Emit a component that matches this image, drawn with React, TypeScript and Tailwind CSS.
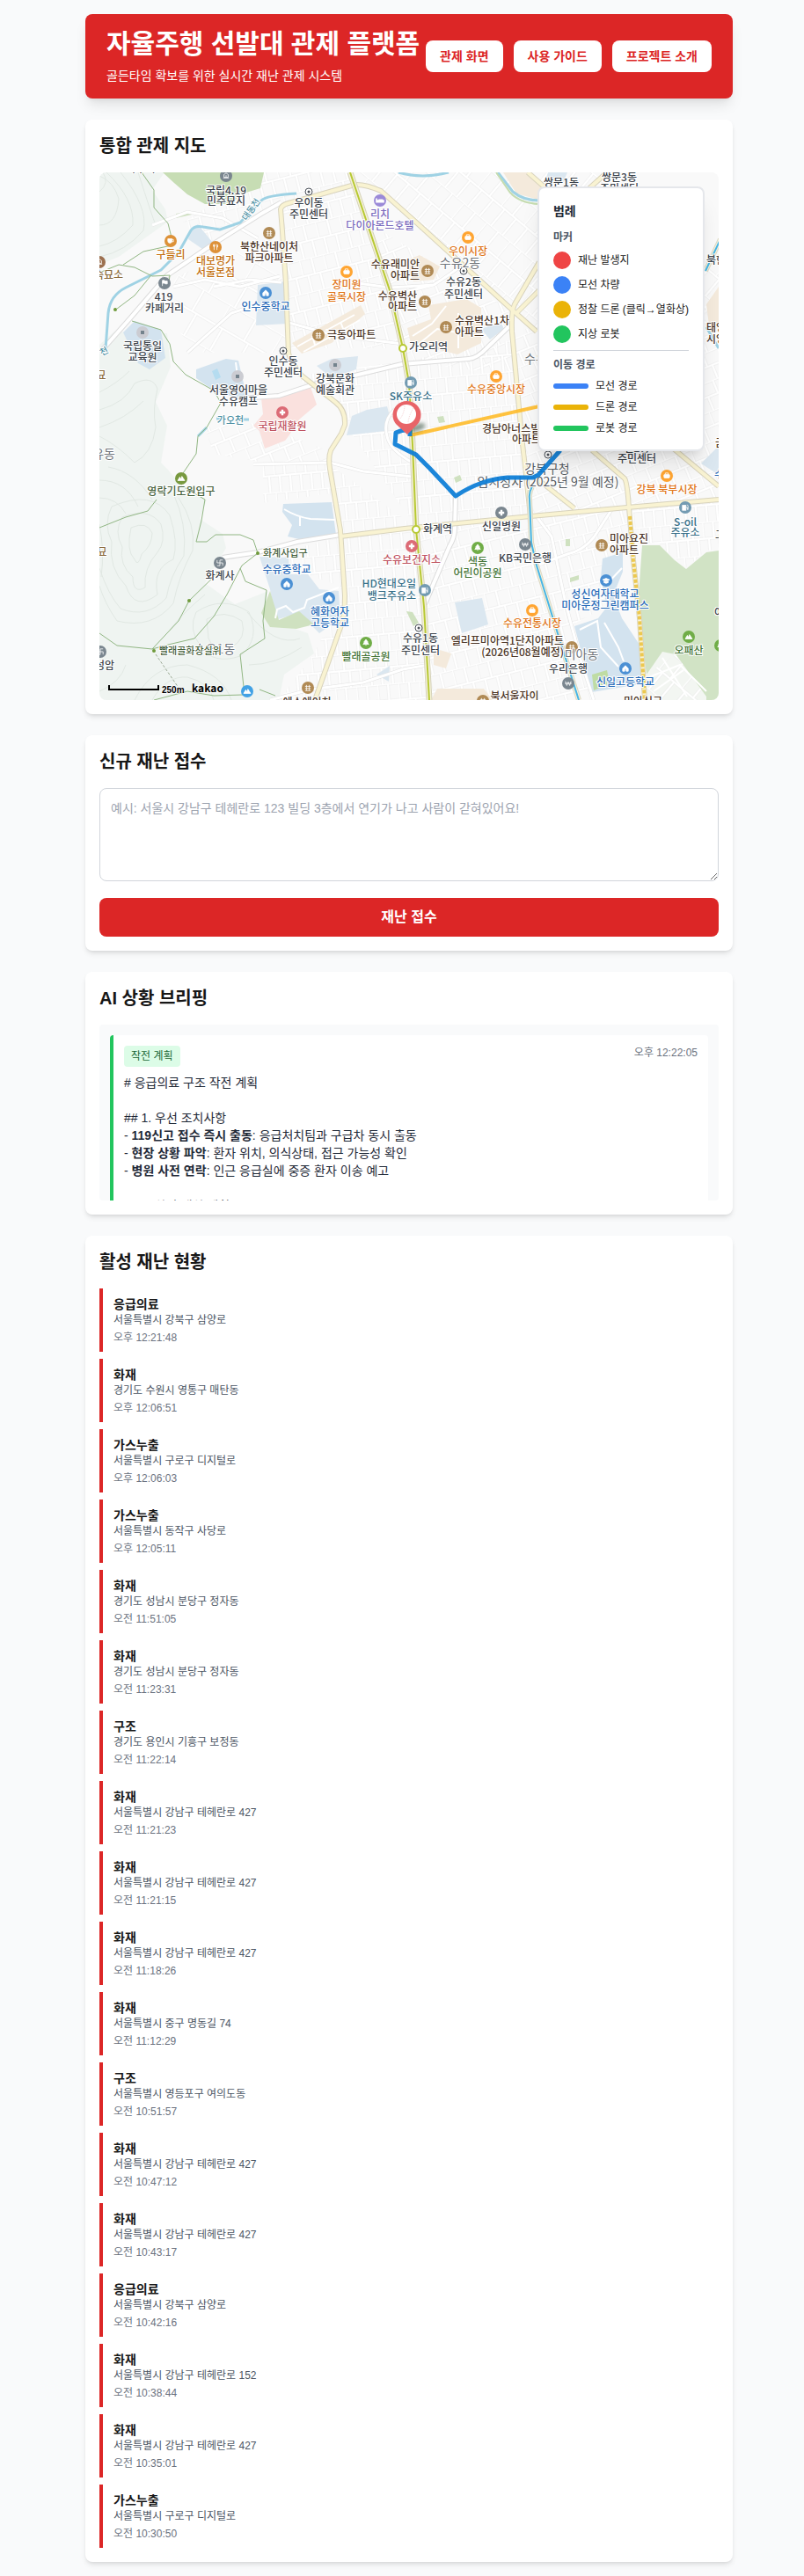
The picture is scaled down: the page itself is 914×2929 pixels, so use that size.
import React from "react";

type Incident = { kind: string; place: string; time: string };

const incidents: Incident[] = [
  { kind: "응급의료", place: "서울특별시 강북구 삼양로", time: "오후 12:21:48" },
  { kind: "화재", place: "경기도 수원시 영통구 매탄동", time: "오후 12:06:51" },
  { kind: "가스누출", place: "서울특별시 구로구 디지털로", time: "오후 12:06:03" },
  { kind: "가스누출", place: "서울특별시 동작구 사당로", time: "오후 12:05:11" },
  { kind: "화재", place: "경기도 성남시 분당구 정자동", time: "오전 11:51:05" },
  { kind: "화재", place: "경기도 성남시 분당구 정자동", time: "오전 11:23:31" },
  { kind: "구조", place: "경기도 용인시 기흥구 보정동", time: "오전 11:22:14" },
  { kind: "화재", place: "서울특별시 강남구 테헤란로 427", time: "오전 11:21:23" },
  { kind: "화재", place: "서울특별시 강남구 테헤란로 427", time: "오전 11:21:15" },
  { kind: "화재", place: "서울특별시 강남구 테헤란로 427", time: "오전 11:18:26" },
  { kind: "화재", place: "서울특별시 중구 명동길 74", time: "오전 11:12:29" },
  { kind: "구조", place: "서울특별시 영등포구 여의도동", time: "오전 10:51:57" },
  { kind: "화재", place: "서울특별시 강남구 테헤란로 427", time: "오전 10:47:12" },
  { kind: "화재", place: "서울특별시 강남구 테헤란로 427", time: "오전 10:43:17" },
  { kind: "응급의료", place: "서울특별시 강북구 삼양로", time: "오전 10:42:16" },
  { kind: "화재", place: "서울특별시 강남구 테헤란로 152", time: "오전 10:38:44" },
  { kind: "화재", place: "서울특별시 강남구 테헤란로 427", time: "오전 10:35:01" },
  { kind: "가스누출", place: "서울특별시 구로구 디지털로", time: "오전 10:30:50" },
];

type Kind =
  | "apt" | "shop" | "food" | "cafe" | "school" | "univ" | "tree" | "cross"
  | "bank" | "gas" | "temple" | "hotel" | "flag" | "peak" | "tomb";

const glyphs: Record<Kind, React.ReactNode> = {
  apt: <path d="M-2 -4V4M2 -4V4M-4 -2H4M-4 1H4M-4 4H4" />,
  shop: (
    <>
      <rect x="-4" y="-2" width="8" height="5" rx="1" fill="#fff" />
      <path d="M-2 -2V-4H2V-2" />
    </>
  ),
  food: <path d="M-3 -4V-1Q-2 0 -1 -1V-4M-2 -4V4M2 4V-4Q4 -3 3 0H2" />,
  cafe: (
    <>
      <path d="M-4 -3H2V1Q1 3 -1 3Q-4 3 -4 0Z" fill="#fff" />
      <path d="M2 -2H4V1H2" />
    </>
  ),
  school: <path d="M-4 4V0L0 -4L4 0V4H1V1H-1V4Z" fill="#fff" />,
  univ: <path d="M-5 -1L0 -3L5 -1L0 1ZM-3 1V3Q0 5 3 3V1L0 2Z" fill="#fff" />,
  tree: <path d="M0 -5L3 -1H2L4 2H-4L-2 -1H-3ZM0 2V4" fill="#fff" />,
  cross: <path d="M0 -4V4M-4 0H4" strokeWidth="3" />,
  bank: <path d="M-4 -3L-2 3L0 -2L2 3L4 -3M-5 0H5" />,
  gas: (
    <>
      <rect x="-4" y="-3" width="5" height="7" fill="#fff" />
      <path d="M1 0H3V3H4V-2L3 -4" />
    </>
  ),
  temple: <path d="M0 -4V4M-4 0H4M-4 -4V0M4 4V0M0 -4H4M0 4H-4" />,
  hotel: <path d="M-5 3V-3M-5 2H5V0H-5M-2 -1H4" strokeWidth="2" />,
  flag: <path d="M-3 4V-4H0L1 -3H4V1H1L0 0H-3" fill="#fff" />,
  peak: <path d="M-5 3L-2 -2L0 1L1 -3L5 3Z" fill="#fff" />,
  tomb: <path d="M-4 3H4M-3 2V-2L0 -4L3 -2V2ZM0 -1V2" />,
};

const BROWN = "#b08a55";
const ORANGE = "#ffa532";
const SLATE = "#7a868f";
const BLUE = "#4b90d4";
const GREEN = "#70ad47";
const ROSE = "#dc6b76";
const TEAL = "#739bb2";

const pois: [number, number, Kind, string][] = [
  [144, 4, "tomb", SLATE], [319, 32, "hotel", "#9b8ad8"], [193, 69, "apt", BROWN],
  [81, 78, "cafe", "#dd9138"], [132, 85, "food", "#dd9138"], [0, 102, "tomb", "#9c7050"],
  [74, 126, "flag", SLATE], [189, 137, "school", BLUE], [281, 113, "shop", ORANGE],
  [373, 112, "apt", BROWN], [370, 147, "apt", BROWN], [249, 185, "apt", BROWN],
  [208, 273, "cross", ROSE], [354, 239, "gas", TEAL], [419, 74, "shop", ORANGE],
  [394, 176, "apt", BROWN], [451, 232, "shop", ORANGE], [93, 348, "peak", "#78993f"],
  [137, 444, "temple", SLATE], [213, 468, "school", BLUE], [261, 484, "school", BLUE],
  [303, 535, "tree", GREEN], [355, 425, "cross", ROSE], [370, 475, "gas", TEAL],
  [1, 545, "temple", SLATE], [168, 590, "peak", "#42a2e5"], [237, 586, "apt", BROWN],
  [457, 387, "cross", SLATE], [430, 427, "tree", GREEN], [484, 423, "bank", SLATE],
  [571, 424, "apt", BROWN], [645, 345, "shop", ORANGE], [666, 381, "gas", TEAL],
  [576, 464, "univ", BLUE], [492, 498, "shop", ORANGE], [537, 540, "apt", BROWN],
  [533, 581, "bank", SLATE], [598, 564, "school", BLUE], [670, 528, "peak", GREEN],
  [436, 601, "apt", BROWN], [706, 538, "tree", GREEN],
];

const offices: [number, number][] = [[238, 22], [209, 203], [414, 112], [510, 321], [363, 518]];
const halls: [number, number][] = [[49, 182], [268, 219], [157, 232]];
const trailDots: [number, number][] = [[18, 156], [180, 433], [102, 487], [62, 544]];
const stations: [number, number][] = [[345, 200], [360, 406]];

type Anchor = "start" | "middle" | "end";
const INK = "#3d444c";
const COCOA = "#4c3628";
const AMBER = "#e0761a";
const NAVY = "#2a6cb8";
const FOREST = "#467538";
const GREY = "#70757b";
const WINE = "#bf5361";
const SEA = "#387089";

const labels: [number, number, string, string, Anchor?, number?][] = [
  [47, -4, "약수터", INK],
  [144, 21, "국립4.19", INK], [144, 33, "민주묘지", INK],
  [238, 35, "우이동", INK], [238, 48, "주민센터", INK],
  [319, 48, "리치", "#7a6bbd"], [319, 61, "다이아몬드호텔", "#7a6bbd"],
  [193, 85, "북한산네이처", COCOA], [193, 98, "파크아파트", COCOA],
  [81, 94, "구들리", "#c26f10"], [132, 101, "대보명가", "#c26f10"], [132, 114, "서울본점", "#c26f10"],
  [27, 117, "숙묘소", "#8a6a3c", "end"],
  [73, 142, "419", INK], [74, 155, "카페거리", INK],
  [189, 153, "인수중학교", NAVY],
  [281, 128, "장미원", AMBER], [281, 142, "골목시장", AMBER],
  [364, 105, "수유래미안", COCOA, "end"], [364, 118, "아파트", COCOA, "end"],
  [361, 141, "수유벽산", COCOA, "end"], [361, 153, "아파트", COCOA, "end"],
  [49, 198, "국립통일", INK], [49, 211, "교육원", INK],
  [259, 185, "극동아파트", COCOA, "start"],
  [209, 215, "인수동", INK], [209, 228, "주민센터", INK],
  [268, 235, "강북문화", INK], [268, 248, "예술회관", INK],
  [158, 248, "서울영어마을", INK], [158, 261, "수유캠프", INK],
  [208, 289, "국립재활원", WINE],
  [149, 282, "가오천", "#4d8fa3", "middle", 11],
  [2, 231, "묘", "#8a6a3c"], [3, 432, "묘", "#8a6a3c"],
  [352, 199, "가오리역", INK, "start"],
  [354, 255, "SK주유소", SEA],
  [419, 90, "우이시장", AMBER],
  [410, 103, "수유2동", GREY, "middle", 14],
  [414, 125, "수유2동", INK], [414, 139, "주민센터", INK],
  [404, 169, "수유벽산1차", COCOA, "start"], [404, 182, "아파트", COCOA, "start"],
  [483, 212, "수유3동", GREY, "start", 14],
  [451, 247, "수유중앙시장", AMBER],
  [435, 292, "경남아너스빌", COCOA, "start"], [469, 304, "아파트", COCOA, "start"],
  [525, 12, "쌍문1동", INK], [591, 6, "쌍문3동", INK], [591, 19, "주민센터", INK],
  [690, 100, "북한산", INK, "start"],
  [690, 177, "태영", COCOA, "start"], [690, 190, "시영", COCOA, "start"],
  [18, 320, "수유동", GREY, "end", 14],
  [93, 363, "영락기도원입구", "#46613c"],
  [186, 433, "화계사입구", "#46613c", "start", 11],
  [137, 459, "화계사", INK],
  [213, 452, "수유중학교", NAVY],
  [262, 500, "혜화여자", NAVY], [262, 513, "고등학교", NAVY],
  [131, 542, "수유1동", GREY, "middle", 14],
  [68, 544, "빨래골화장실위", "#46613c", "start", 11],
  [303, 551, "빨래골공원", FOREST],
  [355, 441, "수유보건지소", WINE],
  [360, 468, "HD현대오일", SEA, "end"], [360, 482, "뱅크주유소", SEA, "end"],
  [17, 561, "성암", INK, "end"],
  [236, 603, "에스에이치", COCOA],
  [509, 337, "강북구청", "#575c62", "middle", 14],
  [510, 352, "임시청사 (2025년 9월 예정)", "#575c62", "middle", 14],
  [457, 403, "신일병원", INK],
  [368, 406, "화계역", INK, "start"],
  [430, 443, "색동", FOREST], [430, 456, "어린이공원", FOREST],
  [484, 439, "KB국민은행", INK],
  [580, 417, "미아요진", COCOA, "start"], [580, 430, "아파트", COCOA, "start"],
  [611, 314, "번2동", INK], [611, 326, "주민센터", INK],
  [645, 361, "강북 북부시장", AMBER],
  [666, 398, "S-oil", SEA], [666, 410, "주유소", SEA],
  [575, 480, "성신여자대학교", NAVY], [575, 493, "미아운정그린캠퍼스", NAVY],
  [492, 513, "수유전통시장", AMBER],
  [365, 530, "수유1동", INK], [365, 544, "주민센터", INK],
  [548, 548, "미아동", GREY, "middle", 14],
  [528, 533, "엘리프미아역1단지아파트", COCOA, "end"],
  [528, 546, "(2026년08월예정)", COCOA, "end"],
  [533, 565, "우리은행", INK],
  [598, 580, "신일고등학교", NAVY],
  [670, 544, "오패산", FOREST],
  [472, 596, "북서울자이", COCOA],
  [618, 602, "미아신구", COCOA],
  [700, 308, "금호", COCOA, "start"], [699, 344, "수송", NAVY, "start"],
  [700, 413, "고려", INK, "start"], [699, 501, "어린이", INK, "start"],
];

const yellowRoads = [
  "M215 207L212 127L208 67L206 42Q207 37 215 35L237 29L290 14Q302 13 320 21L357 54L470 157L497 181",
  "M215 205Q216 213 230 231L268 261Q280 270 279 287L275 297L263 316Q260 324 262 337L274 407L279 481Q279 500 276 512L245 600",
  "M500 102L472 150Q468 158 469 181L480 300L485 344L490 391",
  "M500 134L474 160", "M492 344L540 382",
  "M274 414L347 405L490 391L600 381L704 372",
  "M560 316L597 348Q600 352 602 381L607 441L614 507L620 600",
  "M487 0L512 22", "M577 0L557 18", "M650 312L704 357",
];

const whiteRoads = [
  "M4 201L34 167L77 117L130 81L184 47L207 34",
  "M160 257L204 254L244 241L290 231L344 218L420 212Q430 211 440 200L469 172",
  "M405 366L404 405Q404 415 398 425L370 491",
  "M140 438L180 432L225 420L274 412",
];

const laneRoads = [
  "M497 391L514 414L530 490L547 554L562 600",
  "M582 384L562 415Q550 430 532 434L497 447",
  "M175 332L262 330M262 330L300 340L356 346",
  "M194 600L240 588L300 580L345 565L374 560",
  "M347 136L380 128L395 118L415 104M280 124L330 131L380 128",
  "M336 269Q322 282 327 300Q330 316 356 330",
  "M207 125L170 122L130 130M212 170L270 186L345 195",
  "M100 205L150 160L180 150M84 130L120 122L160 130L205 118M60 60L100 45L140 52L180 75",
];

const trails = [
  "M48 0L62 20L62 40L78 58L84 82M0 114L22 105L40 108L60 118L80 117L79 125M27 105L50 90L82 83M58 118L40 140L20 155",
  "M37 169L70 179L80 195L84 215L98 230L130 248L138 262L122 290L112 300L110 320L93 345M93 356L120 372L116 396L110 420L122 420L132 412L160 412L175 418L180 433",
  "M0 404L30 392L55 385L65 372M180 433L162 447L145 480L130 505L108 530L78 537L60 542L20 538L0 524M60 542L90 510L102 487L135 455M160 450L166 465L190 475L186 510L188 530L160 548L164 585M62 600L100 590L130 595L163 594M182 588L200 595",
];

const contours = [
  "M8 0Q40 30 38 60Q20 80 0 84M0 60Q20 60 22 30Q16 10 0 4M24 0Q56 40 50 66Q30 90 0 96M44 0Q60 50 64 60",
  "M0 250Q20 240 34 226M0 270Q30 262 40 240Q60 230 66 246Q60 270 64 290Q60 320 40 330Q20 310 0 300",
  "M0 290Q30 280 50 260M10 335Q40 340 60 372M0 350Q30 350 44 380M0 370Q20 370 30 388",
  "M14 380Q60 360 80 390Q90 420 84 440Q60 450 66 480Q40 500 30 470Q10 450 14 420Q4 400 14 380Z",
  "M26 392Q56 380 70 400Q76 420 66 432Q50 450 52 472Q38 480 38 460Q22 446 26 426Q16 408 26 392Z",
  "M36 404Q54 396 60 410Q60 424 48 434Q44 450 40 440Q30 430 36 404Z",
  "M90 370Q110 400 106 430Q90 460 84 490Q60 520 20 510Q6 490 0 470",
  "M84 365Q100 400 96 436Q80 460 76 484Q54 508 24 496Q10 480 0 450",
  "M110 500Q140 480 170 500Q184 530 160 550Q130 560 116 540Q100 520 110 500Z",
  "M122 508Q142 496 162 510Q168 530 150 540Q130 546 124 530Z",
  "M40 600Q60 560 100 560Q140 570 150 600M60 600Q76 572 100 574Q126 580 130 600M0 590Q24 580 30 560M80 520Q96 500 120 480",
  "M4 0Q12 12 0 22M0 400Q6 430 2 460M170 560Q200 560 230 540M168 500Q200 540 228 530",
];

const zones: [string, string][] = [
  ["#c7ddb4", "M72 0H187L183 18L160 25L150 36H120L100 25L85 12Z"],
  ["#d1e3c5", "M617 424H637L654 441L667 451L690 432L704 430V600H690L655 548L622 571L612 494Z"],
  ["#f3f6f2", "M640 545L655 548L690 596V600H622V571Z"],
  ["#dbe7f0", "M180 128L212 124L214 172L178 174Z"],
  ["#dbe7f0", "M103 66L112 59L124 74L130 81L117 87L101 76Z"],
  ["#d3e3ef", "M27 182L40 169L70 179L75 211L57 224L44 217Z"],
  ["#d3e3ef", "M110 224L144 212L158 214L164 240L167 260L130 248L110 234Z"],
  ["#dbe7f0", "M247 220L264 212L294 209L292 224L264 234Z"],
  ["#dbe7f0", "M287 277L304 270L327 266L330 277L325 294L281 299Z"],
  ["#d3e3ef", "M209 377L264 375L269 412L231 418L214 414L219 401L208 386Z"],
  ["#dbe7f0", "M182 437L215 438L216 457L237 457L250 474L272 476L274 507L250 524L227 501L200 509L194 474Z"],
  ["#cfe1c0", "M194 476L204 509L227 499L244 514L224 519L194 517L184 501Z"],
  ["#fae1de", "M184 257L240 244L247 264L227 281L215 300L211 305L188 314L182 294L175 288L186 275Z"],
  ["#f4eadc", "M219 194L297 151L302 161L264 194L230 206Z"],
  ["#f4eadc", "M347 101L364 94L387 107L380 122L357 124Z"],
  ["#f4eadc", "M374 151L417 144L434 154V194L407 207L354 194L350 177L377 167Z"],
  ["#f4eadc", "M459 0H490L504 14L499 31L474 24Z"],
  ["#f4eadc", "M380 541L400 547L394 564L380 560Z"],
  ["#f4eadc", "M384 587H437L447 600H377Z"],
  ["#f4eadc", "M690 150L704 130V176L694 182Z"],
  ["#dbe7f0", "M404 489L435 484L442 514L412 524Z"],
  ["#d3e3ef", "M572 439L595 432V454L584 481L594 507L614 537L620 581L560 591L540 516L567 507L577 494L570 461Z"],
  ["#bfdca4", "M560 571L577 566L580 581L562 589Z"],
  ["#dbe7f0", "M684 331L704 311V344Z"],
  ["#dbe7f0", "M510 0H532L527 12L507 9Z"],
  ["#dbe7f0", "M434 178L456 170L460 178L444 190Z"],
  ["#dbe7f0", "M315 571L330 561L329 579Z"],
  ["#cfe1c0", "M87 47L104 44L105 48L87 52Z"],
  ["#cfe1c0", "M349 499L356 500L363 512L357 516Z"],
  ["#cfe1c0", "M384 278L391 277L393 284L386 285Z"],
  ["#cfe1c0", "M403 347L410 344L412 350L405 353Z"],
  ["#cfe1c0", "M535 461L545 458L545 463L535 466Z"],
  ["#cfe1c0", "M530 417H535V425H530Z"],
];

const MAP_FONT = '"Noto Sans CJK KR", "Noto Sans", sans-serif';
const LINE_4 = "M492 357Q488 364 489 371L491 421L497 447L520 521L545 600M706 76L689 112";
const LINE_UI = "M285 0L330 134L345 200L352 240L356 310L360 406L369 494L375 600";

function StreetPattern({ id, angle, w, h }: { id: string; angle: number; w: number; h: number }) {
  const d = `M0 0H${w * 2}M0 ${h}H${w * 2}M0 0V${h}M${w} 0V${h}M${w + 6} ${h}V${h * 2}M6 ${h}V${h * 2}`;
  return (
    <pattern id={id} width={w * 2} height={h * 2} patternUnits="userSpaceOnUse" patternTransform={`rotate(${angle})`}>
      <path d={d} stroke="#ebebeb" strokeWidth="3" fill="none" />
      <path d={d} stroke="#fff" strokeWidth="2" fill="none" />
    </pattern>
  );
}

function StreetMap() {
  return (
    <svg
      viewBox="0 0 704 600"
      preserveAspectRatio="xMidYMid slice"
      className="block h-full w-full"
      role="img"
      aria-label="통합 관제 지도"
    >
      <defs>
        <StreetPattern id="st-a" angle={-14} w={14} h={19} />
        <StreetPattern id="st-b" angle={40} w={17} h={24} />
        <StreetPattern id="st-c" angle={-5} w={12} h={19} />
        <StreetPattern id="st-d" angle={-22} w={18} h={16} />
        <StreetPattern id="st-e" angle={30} w={34} h={28} />
        <filter id="soft" x="-50%" y="-50%" width="200%" height="200%">
          <feGaussianBlur stdDeviation="2" />
        </filter>
      </defs>
      <rect width="704" height="600" fill="#f9f9f9" />
      <path d="M0 0H74L60 20L75 42L78 56L22 96L0 105Z" fill="#eff4f1" />
      <path
        d="M0 196L17 181L77 183L81 221L64 261L77 288L70 330L77 337L94 357L122 372L114 394L140 411L144 427L120 467L154 491L192 476L186 507L237 524L244 547L210 571L204 600H0Z"
        fill="#eff4f1"
      />
      <g fill="none" stroke="#e1e8e3" strokeWidth="1">
        {contours.map((d) => <path key={d} d={d} />)}
      </g>
      <g>
        <path d="M187 0H285L345 200L215 200L206 40L140 60L130 80L90 60Z" fill="url(#st-a)" />
        <path d="M84 120L205 70L212 205L110 205L90 180Z" fill="url(#st-e)" />
        <path d="M290 0H560L704 100V180L500 185Z" fill="url(#st-b)" />
        <path d="M310 60L470 158L469 230L345 215Z" fill="url(#st-d)" />
        <path d="M469 180L704 150V372L490 391Z" fill="url(#st-d)" />
        <path d="M345 215L470 190L490 390L360 404L282 290L270 262L220 232Z" fill="url(#st-c)" />
        <path d="M120 290L178 285L262 317L262 332L200 332L130 320Z" fill="url(#st-d)" />
        <path d="M186 332H262L360 404L274 412L262 365L186 376Z" fill="url(#st-c)" />
        <path d="M184 438L274 414L360 406L375 600H204L244 547L279 481L272 470Z" fill="url(#st-c)" />
        <path d="M360 404L490 391L545 600H375Z" fill="url(#st-a)" />
        <path d="M490 391L602 381L607 430L570 440L577 494L538 514L560 600H545Z" fill="url(#st-a)" />
        <path d="M604 381L704 372V428L690 430L668 449L650 436L636 422L606 420Z" fill="url(#st-c)" />
      </g>
      {zones.map(([fill, d]) => <path key={d} d={d} fill={fill} />)}
      <path d="M622 571L655 548L690 596V600H622Z" fill="url(#st-b)" />
      <path d="M128 226l6 -3 4 10 -6 3Z" fill="#b5dcf0" />
      <g fill="none" stroke="#fff" strokeWidth="2">
        <path d="M210 383Q225 392 240 394L268 395M228 392V402M200 507L202 497L212 493L220 500L233 495L236 486L272 472" />
        <path d="M225 198L290 162M232 204L296 168M245 196L242 186M262 190L258 178M278 180L274 170M356 186L378 172L394 152M362 196L384 178L430 186M408 160V200" />
        <path d="M546 520L566 510L570 540L590 562M574 512L590 540L596 556M575 470L594 450M155 216L157 232" />
        <path d="M622 575L660 560L690 590M640 552L668 596M630 590L664 566" />
      </g>
      <g fill="none" stroke="#e2e2e2" strokeWidth="4">{laneRoads.map((d) => <path key={d} d={d} />)}</g>
      <g fill="none" stroke="#fff" strokeWidth="3">{laneRoads.map((d) => <path key={d} d={d} />)}</g>
      <g fill="none" stroke="#dcdcdc" strokeWidth="6">{whiteRoads.map((d) => <path key={d} d={d} />)}</g>
      <g fill="none" stroke="#fff" strokeWidth="4">{whiteRoads.map((d) => <path key={d} d={d} />)}</g>
      <g fill="none" stroke="#9fd2e4" strokeWidth="3" strokeLinejoin="round">
        <path d="M7 201L10 160Q12 140 30 131L70 111L90 91L104 66Q108 60 118 62L137 65L160 57L184 32Q190 26 224 24" />
        <path d="M340 0Q367 8 397 0M453 0L470 22Q482 32 500 32M112 300L122 290M690 176L704 200M133 280H142M160 281H170" />
      </g>
      <path d="M451 0L467 23Q478 35 500 36" fill="none" stroke="#c5dcb0" strokeWidth="2" />
      <g fill="none" stroke="#91b683" strokeWidth="1">{trails.map((d) => <path key={d} d={d} />)}</g>
      <path d="M64 548L90 586" fill="none" stroke="#9aa893" strokeWidth="1" strokeDasharray="3 2" />
      <g fill="none" stroke="#d8d3bd" strokeWidth="6">{yellowRoads.map((d) => <path key={d} d={d} />)}</g>
      <g fill="none" stroke="#f9f3d2" strokeWidth="4">{yellowRoads.map((d) => <path key={d} d={d} />)}</g>
      <path d="M603 391L607 441L614 507L620 600" fill="none" stroke="#ecc850" strokeWidth="4" strokeDasharray="4 2" />
      <g fill="none">
        <path d={LINE_4} stroke="#dcd8c4" strokeWidth="6" />
        <path d={LINE_4} stroke="#f6f2dc" strokeWidth="4" />
        <path d={LINE_4} stroke="#47b5e6" strokeWidth="2" />
        <path d={LINE_UI} stroke="#d5d2ba" strokeWidth="7" />
        <path d={LINE_UI} stroke="#f4f1d8" strokeWidth="5" />
        <path d={LINE_UI} stroke="#b8c934" strokeWidth="2" />
      </g>

      {trailDots.map(([x, y]) => <circle key={`${x}-${y}`} cx={x} cy={y} r="2" fill="#6f9a3c" />)}
      {stations.map(([x, y]) => (
        <circle key={`${x}-${y}`} cx={x} cy={y} r="4" fill="#fff" stroke="#b8c934" strokeWidth="2" />
      ))}
      {offices.map(([x, y]) => (
        <g key={`${x}-${y}`}>
          <circle cx={x} cy={y} r="4" fill="#fff" stroke="#4a5058" />
          <circle cx={x} cy={y} r="1.5" fill="#4a5058" />
        </g>
      ))}
      {halls.map(([x, y]) => (
        <g key={`${x}-${y}`}>
          <circle cx={x} cy={y} r="7" fill="#cbccd2" />
          <rect x={x - 2} y={y - 2} width="4" height="4" fill="#74838d" />
        </g>
      ))}
      {pois.map(([x, y, kind, color]) => (
        <g key={`${x}-${y}`} transform={`translate(${x} ${y})`} fill="none" stroke="#fff" strokeWidth="1">
          <circle r="7" fill={color} stroke="none" />
          <g transform="scale(.8)">{glyphs[kind]}</g>
        </g>
      ))}
      <g fontFamily={MAP_FONT} fontWeight="500" stroke="#fff" strokeWidth="2" strokeLinejoin="round" paintOrder="stroke">
        {labels.map(([x, y, text, fill, anchor = "middle", size = 12]) => (
          <text
            key={`${x}-${y}`}
            x={x}
            y={y + (size > 12 ? 5 : 4)}
            fontSize={size}
            fontWeight={size > 12 ? 400 : 500}
            fill={fill}
            textAnchor={anchor}
          >
            {text}
          </text>
        ))}
        <text x="172" y="46" fontSize="10" fill="#4d8fa3" textAnchor="middle" transform="rotate(-55 172 42)">대동천</text>
        <text x="5" y="207" fontSize="10" fill="#4d8fa3" textAnchor="middle" transform="rotate(-30 5 203)">천</text>
      </g>

      <path d="M353 299L500 266" stroke="#ffb91f" strokeWidth="4" fill="none" opacity="0.85" />
      <path
        d="M353 300V293Q346 292 337 296L336 309L360 321L375 336L405 368Q420 358 435 353T464 347H493L499 344L524 316"
        stroke="#0b7dd6" strokeWidth="5" fill="none" strokeLinejoin="round" opacity="0.93"
      />
      <ellipse cx="362" cy="290" rx="9" ry="4" fill="#3f5a48" opacity="0.6" filter="url(#soft)" transform="rotate(-20 362 290)" />
      <path d="M350 298L338 287A16 16 0 1 1 361 287Z" fill="#e86468" />
      <circle cx="349" cy="275" r="11" fill="#fff" />
      <path
        d="M347 266Q346 275 342 280M357 268Q352 276 351 284"
        fill="none" stroke="#f6d0d1" strokeWidth="1" strokeDasharray="1 1"
      />

      <path d="M11 583V588H67V583" fill="none" stroke="#000" strokeWidth="2" />
      <g stroke="#fff" strokeWidth="1" paintOrder="stroke" fontWeight="700">
        <text x="71" y="592" fontSize="10" fontFamily='"Liberation Sans", sans-serif'>250m</text>
        <text x="105" y="591" fontSize="12" fontFamily='"Noto Sans CJK KR", sans-serif'>kakao</text>
      </g>
    </svg>
  );
}

function Legend() {
  return (
    <aside className="absolute top-4 right-4 rounded-lg border-2 border-gray-200 bg-white p-4 text-xs whitespace-nowrap text-[#171717] shadow-xl">
      <h3 className="mb-3 text-sm font-bold text-[#1f2937]">범례</h3>
      <h4 className="mb-2 font-semibold text-[#4b5563]">마커</h4>
      <ul className="flex flex-col gap-2">
        <li className="flex items-center gap-2"><span className="size-5 rounded-full bg-[#ef4444]" />재난 발생지</li>
        <li className="flex items-center gap-2"><span className="size-5 rounded-full bg-[#3b82f6]" />모선 차량</li>
        <li className="flex items-center gap-2"><span className="size-5 rounded-full bg-[#eab308]" />정찰 드론 (클릭→열화상)</li>
        <li className="flex items-center gap-2"><span className="size-5 rounded-full bg-[#22c55e]" />지상 로봇</li>
      </ul>
      <div className="mt-2 border-t border-[#d1d5db] pt-2">
        <h4 className="mb-2 font-semibold text-[#4b5563]">이동 경로</h4>
        <ul className="flex flex-col gap-2">
          <li className="flex items-center gap-2"><span className="h-1.5 w-10 rounded-full bg-[#3b82f6]" />모선 경로</li>
          <li className="flex items-center gap-2"><span className="h-1.5 w-10 rounded-full bg-[#eab308]" />드론 경로</li>
          <li className="flex items-center gap-2"><span className="h-1.5 w-10 rounded-full bg-[#22c55e]" />로봇 경로</li>
        </ul>
      </div>
    </aside>
  );
}

function Card({ title, children }: { title: string; children: React.ReactNode }) {
  return (
    <section className="rounded-lg bg-white p-4 shadow-md">
      <h2 className="mb-4 text-xl font-bold">{title}</h2>
      {children}
    </section>
  );
}

export default function App() {
  return (
    <div className="min-h-screen bg-[#f9fafb] pl-4 font-['Liberation_Sans','Noto_Sans_CJK_KR',sans-serif] text-[#171717]">
      <div className="mx-auto flex max-w-3xl flex-col gap-6 p-4">
        <header className="flex items-center justify-between rounded-lg bg-[#dc2626] px-6 py-4 text-white shadow-lg">
          <div>
            <h1 className="text-3xl font-bold whitespace-nowrap">자율주행 선발대 관제 플랫폼</h1>
            <p className="mt-2 text-sm">골든타임 확보를 위한 실시간 재난 관제 시스템</p>
          </div>
          <nav className="flex gap-3 text-sm font-semibold whitespace-nowrap text-[#dc2626]">
            <a href="#dashboard" className="rounded-lg bg-white px-4 py-2">관제 화면</a>
            <a href="#guide" className="rounded-lg bg-white px-4 py-2">사용 가이드</a>
            <a href="#about" className="rounded-lg bg-white px-4 py-2">프로젝트 소개</a>
          </nav>
        </header>

        <Card title="통합 관제 지도">
          <div className="relative h-[600px] overflow-hidden rounded-lg">
            <StreetMap />
            <Legend />
          </div>
        </Card>

        <Card title="신규 재난 접수">
          <form onSubmit={(e) => e.preventDefault()}>
            <textarea
              rows={4}
              aria-label="신규 재난 접수"
              placeholder="예시: 서울시 강남구 테헤란로 123 빌딩 3층에서 연기가 나고 사람이 갇혀있어요!"
              className="mb-[19px] block w-full rounded-lg border border-[#d1d5db] p-3 text-sm placeholder:text-[#9ca3af]"
            />
            <button type="submit" className="block w-full rounded-lg bg-[#dc2626] py-2.5 font-bold text-white">
              재난 접수
            </button>
          </form>
        </Card>

        <Card title="AI 상황 브리핑">
          <div className="h-[200px] overflow-hidden rounded bg-[#f9fafb] p-3">
            <article className="rounded border-l-4 border-[#22c55e] bg-white p-3">
              <div className="mb-2 flex items-start justify-between text-xs">
                <span className="rounded bg-[#dcfce7] px-2 py-1 text-[#166534]">작전 계획</span>
                <time className="text-[#6b7280]">오후 12:22:05</time>
              </div>
              <div className="text-sm whitespace-pre-wrap text-[#1f2937]">
                <p>{"# 응급의료 구조 작전 계획\n\n## 1. 우선 조치사항"}</p>
                <p>- <strong>119신고 접수 즉시 출동</strong>: 응급처치팀과 구급차 동시 출동</p>
                <p>- <strong>현장 상황 파악</strong>: 환자 위치, 의식상태, 접근 가능성 확인</p>
                <p>- <strong>병원 사전 연락</strong>: 인근 응급실에 중증 환자 이송 예고</p>
                <p>{"\n## 2. 차량 배치 계획"}</p>
              </div>
            </article>
          </div>
        </Card>

        <Card title="활성 재난 현황">
          <ul className="flex flex-col gap-2">
            {incidents.map((item) => (
              <li key={item.time} className="border-l-4 border-[#dc2626] px-3 py-2">
                <h3 className="text-sm font-bold">{item.kind}</h3>
                <p className="text-xs text-[#4b5563]">{item.place}</p>
                <p className="mt-1 text-xs text-[#6b7280]">{item.time}</p>
              </li>
            ))}
          </ul>
        </Card>
      </div>
    </div>
  );
}
